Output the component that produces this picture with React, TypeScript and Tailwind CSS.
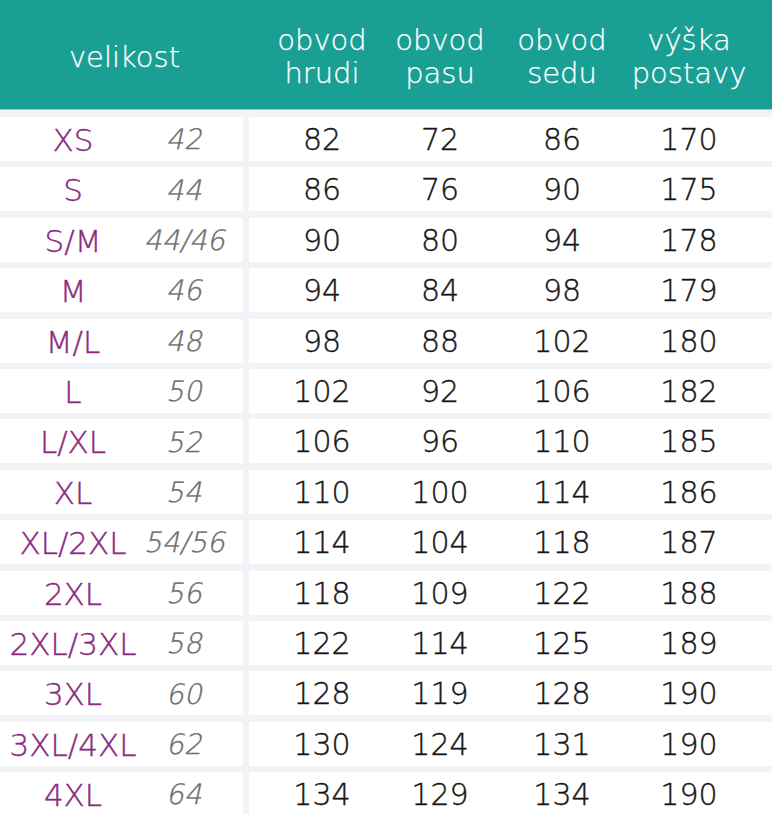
const rows: [string, string, number, number, number, number][] = [
  ["XS", "42", 82, 72, 86, 170],
  ["S", "44", 86, 76, 90, 175],
  ["S/M", "44/46", 90, 80, 94, 178],
  ["M", "46", 94, 84, 98, 179],
  ["M/L", "48", 98, 88, 102, 180],
  ["L", "50", 102, 92, 106, 182],
  ["L/XL", "52", 106, 96, 110, 185],
  ["XL", "54", 110, 100, 114, 186],
  ["XL/2XL", "54/56", 114, 104, 118, 187],
  ["2XL", "56", 118, 109, 122, 188],
  ["2XL/3XL", "58", 122, 114, 125, 189],
  ["3XL", "60", 128, 119, 128, 190],
  ["3XL/4XL", "62", 130, 124, 131, 190],
  ["4XL", "64", 134, 129, 134, 190],
];

const headers = [
  ["obvod", "hrudi"],
  ["obvod", "pasu"],
  ["obvod", "sedu"],
  ["výška", "postavy"],
];

export default function App() {
  return (
    <div className="w-[772px] h-[814px] overflow-hidden bg-[#f2f3f7] font-['DejaVu_Sans',sans-serif] font-extralight [-webkit-text-stroke:0.4px_currentColor]">
      {/* header */}
      <div className="h-[110px] bg-[#1a9f94] border-b border-[#8fd3cc] text-white text-[29px] grid grid-cols-[249px_146px_90px_154px_100px] items-center [-webkit-text-stroke:0.25px_currentColor]">
        <div className="text-center pt-[6px]">velikost</div>
        {headers.map(([a, b]) => (
          <div key={a + b} className="flex flex-col items-center leading-[33px] pt-[4px]">
            <span>{a}</span>
            <span>{b}</span>
          </div>
        ))}
      </div>

      {/* rows */}
      <div className="flex flex-col gap-[6.4px] pt-[7px]">
        {rows.map(([size, eu, chest, waist, hips, height]) => (
          <div key={size} className="flex h-[44px] gap-[6px]">
            <div className="w-[243px] bg-white grid grid-cols-[146px_80px] items-center">
              <div className="text-center text-[31px] text-[#8b2b7f]">{size}</div>
              <div className="text-center text-[28px] text-[#6e6e6e]">
                <span className="inline-block -skew-x-12">{eu}</span>
              </div>
            </div>
            <div className="flex-1 bg-white grid grid-cols-[146px_90px_154px_100px] items-center text-[30px] text-[#161616]">
              <div className="text-center">{chest}</div>
              <div className="text-center">{waist}</div>
              <div className="text-center">{hips}</div>
              <div className="text-center">{height}</div>
            </div>
          </div>
        ))}
      </div>
    </div>
  );
}
